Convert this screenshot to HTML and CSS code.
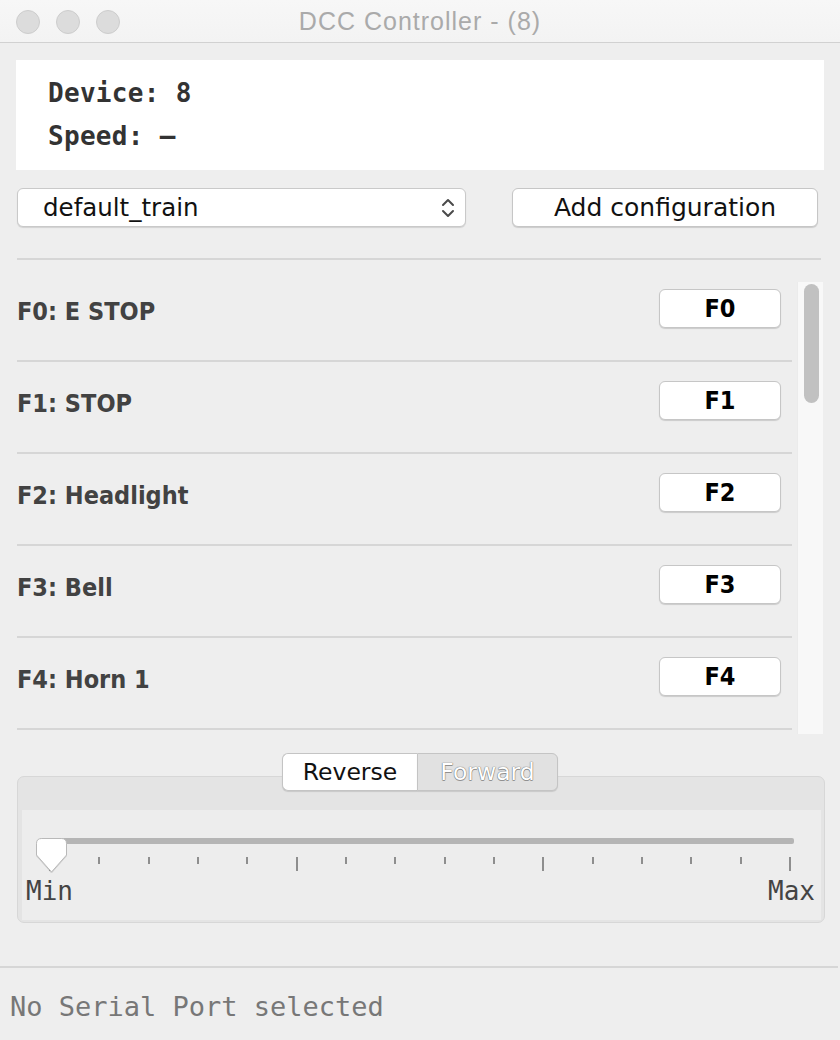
FILE: index.html
```html
<!DOCTYPE html>
<html>
<head>
<meta charset="utf-8">
<title>DCC Controller</title>
<link rel="stylesheet" href="styles.css">
</head>
<body>
<div class="window">
  <header class="titlebar">
    <div class="lights">
      <span class="light"></span><span class="light"></span><span class="light"></span>
    </div>
    <div class="title">DCC Controller - (8)</div>
  </header>

  <main class="main">
    <section class="info">
      <div class="info-line">Device: 8</div>
      <div class="info-line">Speed: &#8211;</div>
    </section>

    <div class="controls">
      <div class="combo">
        <span class="combo-text">default_train</span>
        <svg class="combo-arrows" width="14" height="24" viewBox="0 0 14 24">
          <path d="M2 9 L7 4 L12 9" fill="none" stroke="#4a4a4a" stroke-width="2" stroke-linecap="round" stroke-linejoin="round"/>
          <path d="M2 15 L7 20 L12 15" fill="none" stroke="#4a4a4a" stroke-width="2" stroke-linecap="round" stroke-linejoin="round"/>
        </svg>
      </div>
      <button class="btn add-btn">Add configuration</button>
    </div>

    <div class="sep"></div>

    <div class="list">
      <div class="rows">
        <div class="row"><span class="row-label">F0: E STOP</span><button class="btn fn-btn">F0</button></div>
        <div class="row"><span class="row-label">F1: STOP</span><button class="btn fn-btn">F1</button></div>
        <div class="row"><span class="row-label">F2: Headlight</span><button class="btn fn-btn">F2</button></div>
        <div class="row"><span class="row-label">F3: Bell</span><button class="btn fn-btn">F3</button></div>
        <div class="row"><span class="row-label">F4: Horn 1</span><button class="btn fn-btn">F4</button></div>
      </div>
      <div class="scrollbar"><div class="thumb"></div></div>
    </div>

    <div class="segmented">
      <span class="seg seg-on">Reverse</span><span class="seg seg-off">Forward</span>
    </div>

    <section class="group">
      <div class="group-inner">
        <div class="slider">
          <div class="track"></div>
          <div class="ticks">
            <i class="tick major"></i><i class="tick"></i><i class="tick"></i><i class="tick"></i><i class="tick"></i>
            <i class="tick major"></i><i class="tick"></i><i class="tick"></i><i class="tick"></i><i class="tick"></i>
            <i class="tick major"></i><i class="tick"></i><i class="tick"></i><i class="tick"></i><i class="tick"></i>
            <i class="tick major"></i>
          </div>
          <svg class="knob" width="33" height="37" viewBox="0 0 33 37">
            <path d="M1.5 6.5 Q1.5 1.5 6.5 1.5 L26.5 1.5 Q31.5 1.5 31.5 6.5 L31.5 18 L16.5 35 L1.5 18 Z" fill="#ffffff" stroke="#b9b9b9" stroke-width="1"/>
          </svg>
          <div class="scale">
            <span>Min</span><span>Max</span>
          </div>
        </div>
      </div>
    </section>
  </main>

  <footer class="status">
    <div class="status-sep"></div>
    <div class="status-text">No Serial Port selected</div>
  </footer>
</div>
</body>
</html>
```

FILE: styles.css
```css
html, body {
  margin: 0;
  padding: 0;
}
body {
  background: #eeeeee;
  width: 840px;
  height: 1040px;
  overflow: hidden;
  font-family: "DejaVu Sans", "Noto Sans", sans-serif;
}
.window {
  width: 840px;
  height: 1040px;
  background: #eeeeee;
}

/* title bar */
.titlebar {
  position: relative;
  height: 42px;
  border-bottom: 1px solid #d1d1d1;
  background: linear-gradient(#f7f7f7, #f3f3f3);
  display: flex;
  align-items: center;
  justify-content: center;
}
.lights {
  position: absolute;
  left: 16px;
  top: 10px;
  display: flex;
  gap: 16px;
}
.light {
  width: 24px;
  height: 24px;
  border-radius: 50%;
  background: #dcdcdc;
  border: 1px solid #cdcdcd;
  box-sizing: border-box;
}
.title {
  font-family: "Liberation Sans", Arial, sans-serif;
  font-size: 25px;
  letter-spacing: 1px;
  color: #aaaaaa;
  margin-top: 1px;
}

/* main */
.main {
  padding: 0 16px;
}
.info {
  margin-top: 17px;
  height: 110px;
  box-sizing: border-box;
  background: #ffffff;
  padding: 12px 32px 0;
}
.info-line {
  font-family: "DejaVu Sans Mono", "Liberation Mono", monospace;
  font-weight: bold;
  font-size: 26px;
  letter-spacing: 0.3px;
  line-height: 43px;
  color: #333333;
}

.controls {
  margin: 18px 0 0 1px;
  display: flex;
  gap: 46px;
  height: 39px;
}
.combo {
  width: 449px;
  box-sizing: border-box;
  background: #ffffff;
  border: 1px solid #c9c9c9;
  border-radius: 6px;
  box-shadow: 0 1px 1px rgba(0, 0, 0, 0.12);
  display: flex;
  align-items: center;
  padding: 0 10px 0 25px;
}
.combo-text {
  flex: 1;
  font-size: 24.5px;
  color: #111111;
}
.combo-arrows {
  display: block;
}
.btn {
  font-family: "DejaVu Sans", sans-serif;
  background: #ffffff;
  border: 1px solid #c6c6c6;
  border-radius: 6px;
  box-shadow: 0 1px 1px rgba(0, 0, 0, 0.15);
  color: #111111;
  padding: 0;
  margin: 0;
  box-sizing: border-box;
}
.add-btn {
  width: 306px;
  font-size: 25px;
}

.sep {
  margin: 31px 3px 0 1px;
  height: 2px;
  background: #d6d6d6;
}

/* function list */
.list {
  margin-top: 10px;
  height: 464px;
  display: flex;
  gap: 5px;
  overflow: hidden;
}
.rows {
  width: 775px;
  margin-left: 1px;
}
.row {
  height: 92px;
  box-sizing: border-box;
  padding: 0 11px 8px 0;
  border-bottom: 2px solid #d6d6d6;
  display: flex;
  align-items: center;
}
.row-label {
  flex: 1;
  font-family: "DejaVu Sans Condensed", "DejaVu Sans", sans-serif;
  font-stretch: condensed;
  font-weight: bold;
  font-size: 25px;
  color: #424242;
}
.fn-btn {
  width: 122px;
  height: 39px;
  margin-bottom: 5px;
  font-family: "DejaVu Sans Condensed", "DejaVu Sans", sans-serif;
  font-stretch: condensed;
  font-weight: bold;
  font-size: 25px;
  color: #000000;
}
.scrollbar {
  margin-top: 12px;
  width: 26px;
  height: 452px;
  background: #f8f8f8;
  border-left: 1px solid #ebebeb;
  box-sizing: border-box;
  padding: 2px 4px 0 6px;
}
.thumb {
  height: 119px;
  background: #c1c1c1;
  border-radius: 8px;
}

/* direction segmented control */
.segmented {
  position: relative;
  z-index: 1;
  margin: 19px auto 0;
  display: flex;
  width: 276px;
  height: 38px;
}
.seg {
  box-sizing: border-box;
  height: 38px;
  line-height: 36px;
  text-align: center;
  font-size: 23.5px;
  border: 1px solid #c4c4c4;
  box-shadow: 0 1px 1px rgba(0, 0, 0, 0.12);
}
.seg-on {
  width: 135px;
  background: #ffffff;
  color: #111111;
  border-radius: 6px 0 0 6px;
  border-right: none;
}
.seg-off {
  width: 141px;
  background: #e1e1e1;
  color: #ffffff;
  border-radius: 0 6px 6px 0;
  text-shadow: 0 0 1px #6e6e6e, 0 0 1px #6e6e6e, 0 1px 0 #9a9a9a;
}

/* speed group */
.group {
  margin: -15px -1px 0 1px;
  background: #e4e4e4;
  border: 1px solid #d7d7d7;
  border-radius: 7px;
  padding: 33px 3px 2px 4px;
}
.group-inner {
  background: #ededed;
  padding: 17px 0 14px;
}
.slider {
  position: relative;
}
.track {
  margin: 11px 27px 0 18px;
  height: 6px;
  background: #b5b5b5;
  border-radius: 2px;
}
.ticks {
  margin: 13px 0 0 27px;
  width: 742px;
  height: 14px;
  display: flex;
  justify-content: space-between;
  align-items: flex-start;
}
.tick {
  display: block;
  width: 2px;
  height: 7px;
  background: #8e8e8e;
}
.tick.major {
  height: 14px;
}
.knob {
  position: absolute;
  left: 13px;
  top: -1px;
  filter: drop-shadow(0 1px 0.5px rgba(0, 0, 0, 0.12));
}
.scale {
  margin: 5px 6px 0 4px;
  display: flex;
  justify-content: space-between;
  font-family: "DejaVu Sans Mono", "Liberation Mono", monospace;
  font-size: 26px;
  line-height: 30px;
  color: #444444;
}

/* status bar */
.status {
  margin-top: 43px;
}
.status-sep {
  height: 2px;
  margin-right: 2px;
  background: #d6d6d6;
}
.status-text {
  margin: 24px 0 0 10px;
  font-family: "DejaVu Sans Mono", "Liberation Mono", monospace;
  font-size: 27px;
  line-height: 30px;
  color: #777777;
}
```
